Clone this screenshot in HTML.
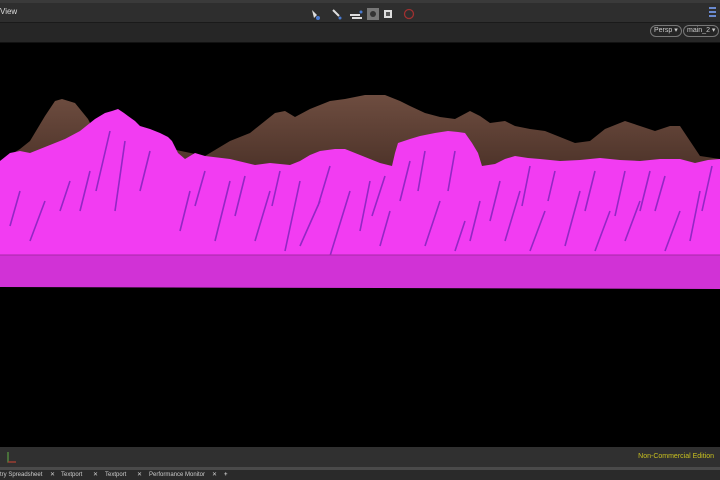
<!DOCTYPE html>
<html><head><style>
body{margin:0;width:720px;height:480px;overflow:hidden;background:#000;font-family:"Liberation Sans",sans-serif;position:relative}
.top{position:absolute;left:0;top:0;width:720px;height:22px;background:#2e2e2e;border-top:3px solid #3a3a3a;box-sizing:border-box}
.bar2{position:absolute;left:0;top:22px;width:720px;height:19px;background:#262626;border-top:1px solid #1a1a1a;border-bottom:1px solid #111}
.btm{position:absolute;left:0;top:447px;width:720px;height:21px;background:#303030}
.sep{position:absolute;left:0;top:467px;width:720px;height:3px;background:#4a4a4a}
.tabs{position:absolute;left:0;top:470px;width:720px;height:10px;background:#2a2a2a;font-size:6px;color:#ccc;line-height:10px;white-space:nowrap}
.tabs span{position:absolute;top:0}
.pill{position:absolute;top:25px;height:10px;border:1px solid #777;border-radius:6px;font-size:7px;color:#ccc;line-height:10px;padding:0 3px}
</style></head><body>
<div class="top"><span style="position:absolute;left:0;top:4px;font-size:8px;color:#ddd">View</span>
<svg style="position:absolute;left:308px;top:3px" width="110" height="16">
<path d="M4 4 L6 12 L9 9 Z" fill="#ddd"/><circle cx="10" cy="12" r="2" fill="#4a7ad0"/>
<path d="M25 4 L31 10" stroke="#ddd" stroke-width="2"/><circle cx="32" cy="12" r="1.5" fill="#4a7ad0"/>
<path d="M42 9 H52 M44 12 H54" stroke="#ddd" stroke-width="2"/><circle cx="53" cy="6" r="1.5" fill="#4a7ad0"/>
<rect x="59" y="2" width="12" height="12" fill="#777"/><circle cx="65" cy="8" r="3" fill="#333"/>
<rect x="76" y="4" width="8" height="8" fill="#ddd"/><rect x="78" y="6" width="4" height="4" fill="#555"/>
<circle cx="101" cy="8" r="4.5" fill="none" stroke="#a03030" stroke-width="1.3"/>
</svg>
<div style="position:absolute;left:709px;top:4px;width:7px;height:12px;background:repeating-linear-gradient(#6a8ad0 0 2px,transparent 2px 4px)"></div>
</div>
<div class="bar2"></div>
<div class="pill" style="left:650px">Persp ▾</div>
<div class="pill" style="left:683px">main_2 ▾</div>
<svg style="position:absolute;left:0;top:41px" width="720" height="406">
<defs><linearGradient id="br" x1="0" y1="0" x2="0" y2="1"><stop offset="0" stop-color="#6e4d40"/><stop offset="1" stop-color="#4d3329"/></linearGradient></defs>
<polygon fill="url(#br)" points="0,120 20,108 30,100 45,75 55,60 62,58 75,62 88,78 95,92 205,115 230,100 250,92 265,80 275,72 285,70 295,76 310,68 330,60 345,58 365,54 385,54 400,60 410,65 425,72 440,76 455,78 470,70 480,75 490,82 505,80 515,85 530,88 545,90 560,96 575,102 590,100 605,88 625,80 640,85 655,90 670,85 680,85 690,100 700,115 720,118 720,128 0,128"/>
<polygon fill="#f23cf2" points="0,120 10,112 20,110 30,112 40,108 55,102 65,98 80,90 95,78 105,72 112,70 118,68 124,72 128,75 135,80 140,85 150,88 160,92 168,96 172,100 178,112 185,118 195,112 205,115 230,118 255,124 270,122 290,124 300,120 310,114 320,110 335,108 345,108 355,112 370,118 380,122 392,125 395,112 398,102 410,98 420,95 435,92 448,90 458,91 465,92 472,102 478,112 482,125 495,123 505,118 515,115 528,117 540,118 560,120 580,119 600,117 620,119 640,120 660,118 680,118 695,122 708,119 720,118 720,214 0,214"/>
<g stroke="#6a1fb0" stroke-width="1.6" opacity=".7" fill="none">
<path d="M110 90 L96 150 M125 100 L115 170 M150 110 L140 150 M230 140 L215 200 M270 150 L255 200 M300 140 L285 210 M320 160 L300 205 M350 150 L330 215 M370 140 L360 190 M410 120 L400 160 M440 160 L425 205 M480 160 L470 200 M520 150 L505 200 M545 170 L530 210 M580 150 L565 205 M610 170 L595 210 M640 160 L625 200 M680 170 L665 210 M700 150 L690 200 M45 160 L30 200 M70 140 L60 170 M190 150 L180 190 M465 180 L455 210 M555 130 L548 160 M650 130 L640 170 M20 150 L10 185 M90 130 L80 170 M205 130 L195 165 M245 135 L235 175 M280 130 L272 165 M330 125 L318 165 M385 135 L372 175 M425 110 L418 150 M455 110 L448 150 M500 140 L490 180 M530 125 L522 165 M595 130 L585 170 M625 130 L615 175 M665 135 L655 170 M712 125 L702 170 M390 170 L380 205"/>
</g>
<polygon fill="#d132d6" points="0,214 720,214 720,248 0,246"/>
<line x1="0" y1="214" x2="720" y2="214" stroke="#a62aa8" stroke-width="1"/>
</svg>
<div class="btm"><svg style="position:absolute;left:5px;top:4px" width="14" height="14"><path d="M3 1 V11 H11" stroke="#5a9a40" stroke-width="1.2" fill="none"/><path d="M3 11 H11" stroke="#b03030" stroke-width="1.2"/></svg>
<span style="position:absolute;right:6px;top:6px;font-size:7px;color:#c8c020">Non-Commercial Edition</span></div>
<div class="sep"></div>
<div class="tabs"><span style="left:0">try Spreadsheet</span><span style="left:50px">✕</span><span style="left:61px">Textport</span><span style="left:93px">✕</span><span style="left:105px">Textport</span><span style="left:137px">✕</span><span style="left:149px">Performance Monitor</span><span style="left:212px">✕</span><span style="left:224px"><b>+</b></span></div>
</body></html>
